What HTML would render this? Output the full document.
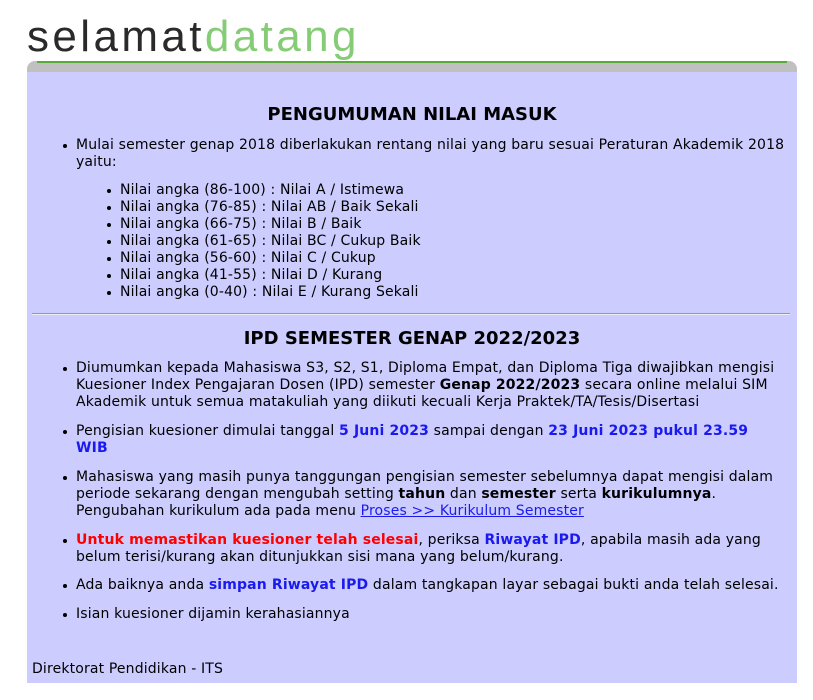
<!DOCTYPE html>
<html><head><meta charset="utf-8"><style>
*{margin:0;padding:0}
body{width:813px;height:700px;background:#fff;position:relative;overflow:hidden;font-family:"DejaVu Sans",Verdana,sans-serif;font-size:14px;letter-spacing:0.15px;color:#000;}
.logo{position:absolute;left:27px;top:9px;font-family:"Liberation Sans",sans-serif;font-size:44px;letter-spacing:3.4px;color:#2a2a2a;line-height:56px}
.logo span{color:#86cc76}
.bar{position:absolute;left:27px;top:61px;width:770px;height:12px;background:#c0c0c0;border-radius:8px 8px 0 0}
.green{position:absolute;left:37px;top:61px;width:750px;height:2px;background:#5aaa3a}
.panel{position:absolute;left:27px;top:72px;width:770px;height:611px;background:#ccccff}
.l{position:absolute;white-space:nowrap;line-height:17px}
.h{position:absolute;width:770px;left:27px;text-align:center;font-weight:bold;font-size:18px;letter-spacing:0;white-space:nowrap}
.b{position:absolute;width:4px;height:4px;background:#000;border-radius:50%}
.bl{color:#1a1aee;font-weight:bold}
.rd{color:#f00;font-weight:bold}
a{color:#1a1aee;text-decoration:underline}
.hr{position:absolute;left:32px;top:313px;width:758px;height:1px;background:#999;border-bottom:1px solid #eee}
</style></head><body>
<div class="logo">selamat<span>datang</span></div>
<div class="bar"></div><div class="green"></div>
<div class="panel"></div>
<div class="h" style="top:104px">PENGUMUMAN NILAI MASUK</div>
<div class="b" style="left:63px;top:144px"></div>
<div class="l" style="left:76px;top:137px">Mulai semester genap 2018 diberlakukan rentang nilai yang baru sesuai Peraturan Akademik 2018</div>
<div class="l" style="left:76px;top:154px">yaitu:</div>
<div class="b" style="left:107px;top:189px"></div><div class="l" style="left:120px;top:182px">Nilai angka (86-100) : Nilai A / Istimewa</div>
<div class="b" style="left:107px;top:206px"></div><div class="l" style="left:120px;top:199px">Nilai angka (76-85) : Nilai AB / Baik Sekali</div>
<div class="b" style="left:107px;top:223px"></div><div class="l" style="left:120px;top:216px">Nilai angka (66-75) : Nilai B / Baik</div>
<div class="b" style="left:107px;top:240px"></div><div class="l" style="left:120px;top:233px">Nilai angka (61-65) : Nilai BC / Cukup Baik</div>
<div class="b" style="left:107px;top:257px"></div><div class="l" style="left:120px;top:250px">Nilai angka (56-60) : Nilai C / Cukup</div>
<div class="b" style="left:107px;top:274px"></div><div class="l" style="left:120px;top:267px">Nilai angka (41-55) : Nilai D / Kurang</div>
<div class="b" style="left:107px;top:291px"></div><div class="l" style="left:120px;top:284px">Nilai angka (0-40) : Nilai E / Kurang Sekali</div>
<div class="hr"></div>
<div class="h" style="top:328px">IPD SEMESTER GENAP 2022/2023</div>
<div class="b" style="left:63px;top:367px"></div>
<div class="l" style="left:76px;top:360px">Diumumkan kepada Mahasiswa S3, S2, S1, Diploma Empat, dan Diploma Tiga diwajibkan mengisi</div>
<div class="l" style="left:76px;top:377px">Kuesioner Index Pengajaran Dosen (IPD) semester <b>Genap 2022/2023</b> secara online melalui SIM</div>
<div class="l" style="left:76px;top:394px">Akademik untuk semua matakuliah yang diikuti kecuali Kerja Praktek/TA/Tesis/Disertasi</div>
<div class="b" style="left:63px;top:430px"></div>
<div class="l" style="left:76px;top:423px">Pengisian kuesioner dimulai tanggal <span class="bl">5 Juni 2023</span> sampai dengan <span class="bl">23 Juni 2023 pukul 23.59</span></div>
<div class="l" style="left:76px;top:440px"><span class="bl">WIB</span></div>
<div class="b" style="left:63px;top:476px"></div>
<div class="l" style="left:76px;top:469px">Mahasiswa yang masih punya tanggungan pengisian semester sebelumnya dapat mengisi dalam</div>
<div class="l" style="left:76px;top:486px">periode sekarang dengan mengubah setting <b>tahun</b> dan <b>semester</b> serta <b>kurikulumnya</b>.</div>
<div class="l" style="left:76px;top:503px">Pengubahan kurikulum ada pada menu <a>Proses &gt;&gt; Kurikulum Semester</a></div>
<div class="b" style="left:63px;top:539px"></div>
<div class="l" style="left:76px;top:532px"><span class="rd">Untuk memastikan kuesioner telah selesai</span>, periksa <span class="bl">Riwayat IPD</span>, apabila masih ada yang</div>
<div class="l" style="left:76px;top:549px">belum terisi/kurang akan ditunjukkan sisi mana yang belum/kurang.</div>
<div class="b" style="left:63px;top:584px"></div>
<div class="l" style="left:76px;top:577px">Ada baiknya anda <span class="bl">simpan Riwayat IPD</span> dalam tangkapan layar sebagai bukti anda telah selesai.</div>
<div class="b" style="left:63px;top:613px"></div>
<div class="l" style="left:76px;top:606px">Isian kuesioner dijamin kerahasiannya</div>
<div class="l" style="left:32px;top:661px">Direktorat Pendidikan - ITS</div>
</body></html>
